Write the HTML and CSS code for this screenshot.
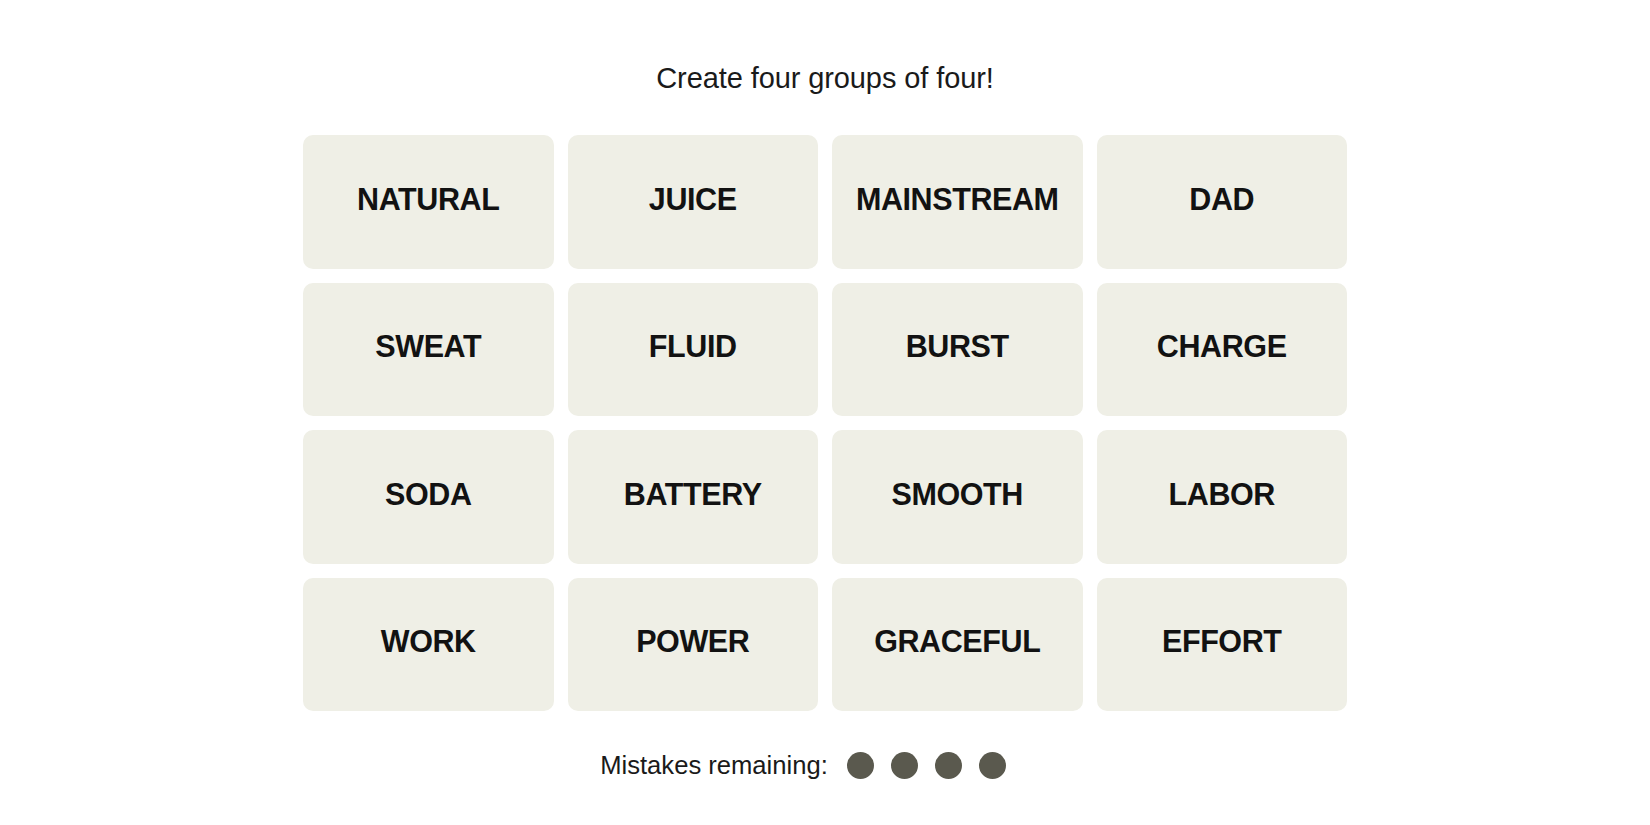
FILE: index.html
```html
<!DOCTYPE html>
<html lang="en">
<head>
<meta charset="utf-8">
<title>Connections</title>
<link rel="stylesheet" href="styles.css">
</head>
<body>
<main class="game">
  <p class="prompt">Create four groups of four!</p>
  <div class="board">
    <button class="card">NATURAL</button>
    <button class="card">JUICE</button>
    <button class="card">MAINSTREAM</button>
    <button class="card">DAD</button>
    <button class="card">SWEAT</button>
    <button class="card">FLUID</button>
    <button class="card">BURST</button>
    <button class="card">CHARGE</button>
    <button class="card">SODA</button>
    <button class="card">BATTERY</button>
    <button class="card">SMOOTH</button>
    <button class="card">LABOR</button>
    <button class="card">WORK</button>
    <button class="card">POWER</button>
    <button class="card">GRACEFUL</button>
    <button class="card">EFFORT</button>
  </div>
  <div class="mistakes">
    <span class="mistakes-label">Mistakes remaining:</span>
    <span class="bubbles">
      <span class="bubble"></span>
      <span class="bubble"></span>
      <span class="bubble"></span>
      <span class="bubble"></span>
      <span class="bubble bubble-hidden"></span>
    </span>
  </div>
</main>
</body>
</html>
```

FILE: styles.css
```css
html, body {
  margin: 0;
  padding: 0;
  background: #ffffff;
}

body {
  font-family: "Liberation Sans", Arial, sans-serif;
  color: #121212;
}

.game {
  display: flex;
  flex-direction: column;
  align-items: center;
  padding-top: 61px;
}

.prompt {
  margin: 0;
  font-size: 29px;
  line-height: 34px;
  font-weight: 400;
  color: #1a1a1a;
  letter-spacing: -0.1px;
}

.board {
  margin-top: 40px;
  display: grid;
  grid-template-columns: repeat(4, 250.5px);
  grid-auto-rows: 133.5px;
  gap: 14px 14px;
}

.card {
  border: none;
  margin: 0;
  padding: 0 0 5px 0;
  background: #efefe6;
  border-radius: 10px;
  font-family: "Liberation Sans", Arial, sans-serif;
  font-weight: 700;
  font-size: 30.5px;
  color: #121212;
  display: flex;
  align-items: center;
  justify-content: center;
  letter-spacing: -0.4px;
}

.mistakes {
  margin-top: 37px;
  display: flex;
  align-items: center;
  height: 34px;
}

.mistakes-label {
  font-size: 25.6px;
  color: #1a1a1a;
  margin-right: 19px;
}

.bubbles {
  display: flex;
  gap: 17px;
}

.bubble {
  width: 27px;
  height: 27px;
  border-radius: 50%;
  background: #5a594e;
}

.bubble-hidden {
  visibility: hidden;
}
```
